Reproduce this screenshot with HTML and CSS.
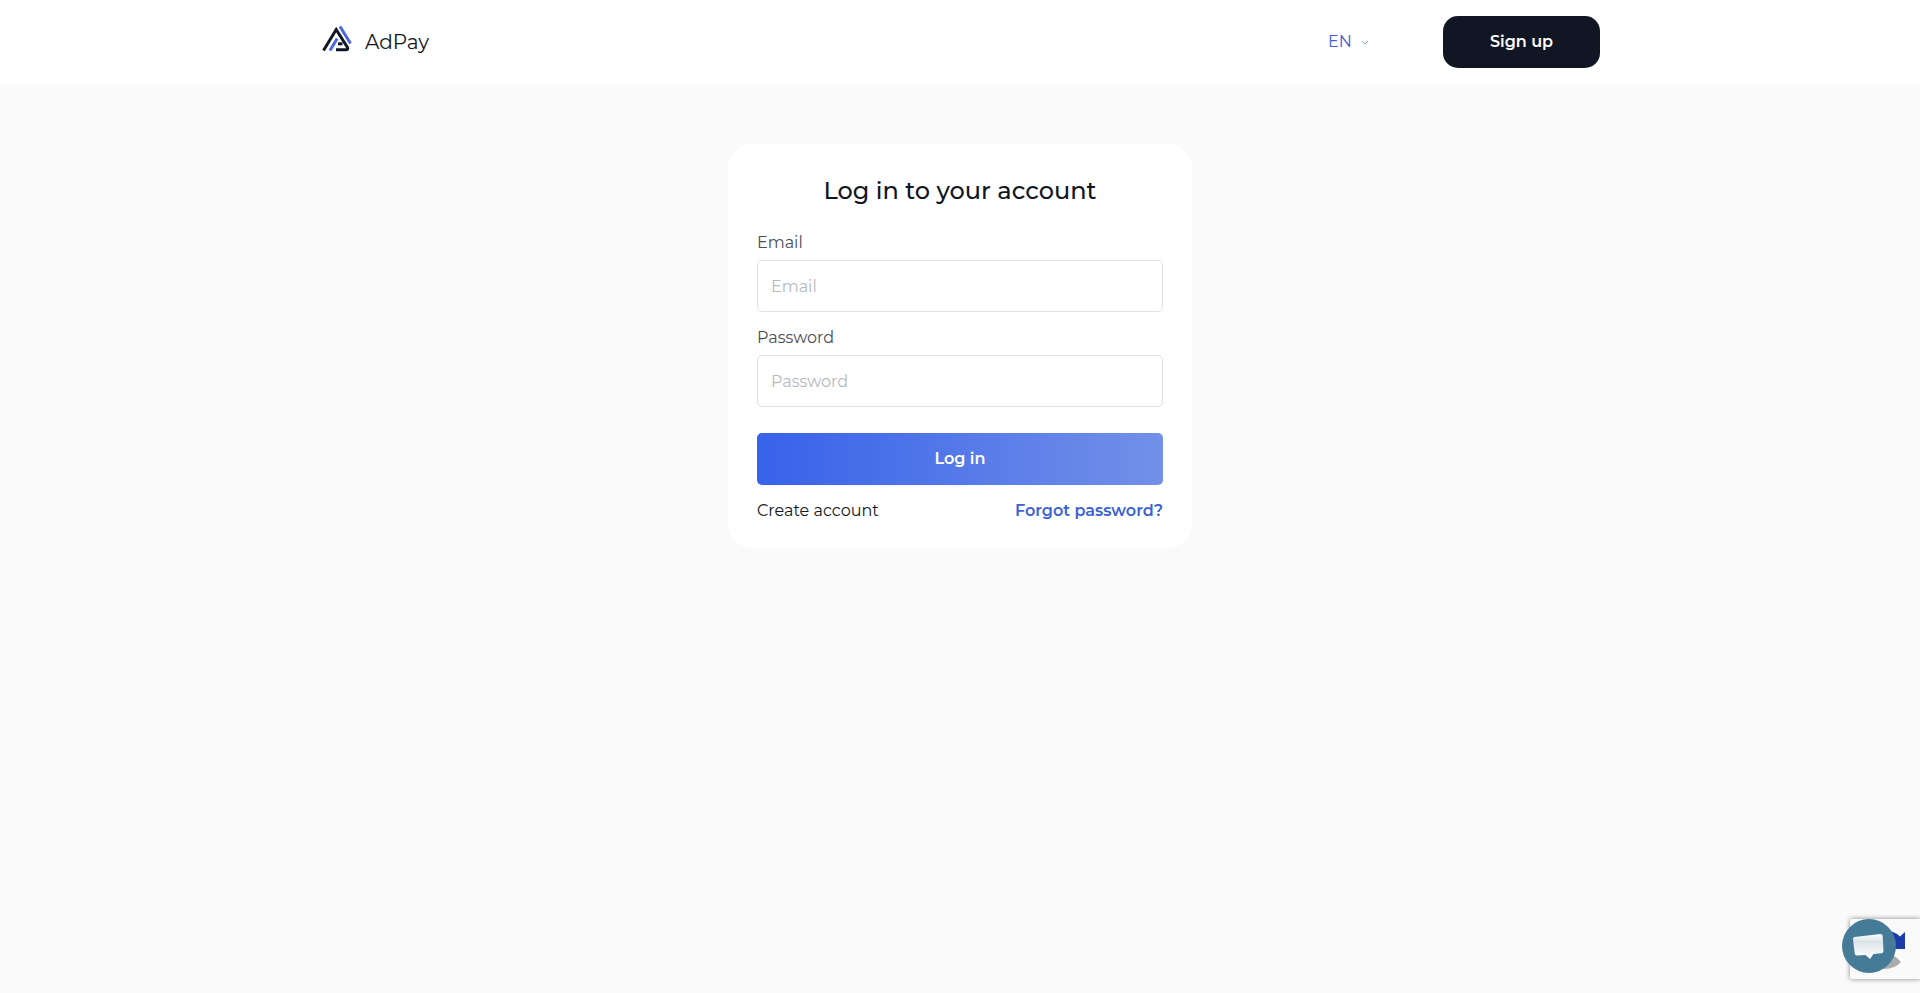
FILE: index.html
```html
<!DOCTYPE html>
<html lang="en">
<head>
<meta charset="utf-8">
<meta name="viewport" content="width=device-width, initial-scale=1">
<title>AdPay</title>
<link rel="stylesheet" href="styles.css">
</head>
<body>
<header class="header">
  <div class="container">
    <a class="logo" href="#">
      <svg class="logo-mark" viewBox="0 0 30 26" aria-hidden="true">
        <path class="ink" d="M1.500 24.500 14.200 3.500 25.500 21.500Q26.500 23.700 24 23.700H14"/>
        <path class="ink" d="M16 17.800H20.500"/>
        <path class="blue" d="M8 24.500 15.200 12.500"/>
        <path class="blue" d="M18 .5 28.500 17.500"/>
      </svg>
      <span class="logo-name">AdPay</span>
    </a>
    <nav class="nav">
      <div class="lang">
        <select class="lang-select" aria-label="Language"><option>EN</option></select>
        <svg class="chevron" viewBox="0 0 8 5" aria-hidden="true"><path d="M1 1 4 4 7 1"/></svg>
      </div>
      <button class="signup" type="button">Sign up</button>
    </nav>
  </div>
</header>
<main class="main">
  <form class="card">
    <h1 class="title">Log in to your account</h1>
    <label class="label" for="email">Email</label>
    <input class="field" id="email" type="email" placeholder="Email">
    <label class="label" for="password">Password</label>
    <input class="field" id="password" type="password" placeholder="Password">
    <button class="submit" type="button">Log in</button>
    <div class="links">
      <a class="create" href="#">Create account</a>
      <a class="forgot" href="#">Forgot password?</a>
    </div>
  </form>
</main>
<div class="captcha">
  <svg class="captcha-mark" viewBox="0 0 46 46" aria-hidden="true">
    <path class="captcha-blue" d="M4 22A19 19 0 0 1 36 11.500L41 7V24H24Z"/>
    <path class="captcha-gray" d="M4 24H20L33 33 37 37Q31 44 20 44 6 43 4 24Z"/>
  </svg>
</div>
<button class="chat" type="button" aria-label="Open chat">
  <svg class="chat-icon" viewBox="0 0 54 54" aria-hidden="true">
    <defs><linearGradient id="bubble" x1="0" y1="0" x2="0" y2="1"><stop offset="0" stop-color="#fff"/><stop offset=".3" stop-color="#dce4e8"/><stop offset="1" stop-color="#fff"/></linearGradient></defs>
    <path d="M12.500 18 38.500 15Q40.500 15 40.700 17L41.500 32Q41.500 34 39.500 34.200L31.500 35 28 40 23.500 36 15 36.500Q13 36.500 12.700 34.500L11 20Q11 18.200 12.500 18Z" fill="url(#bubble)"/>
  </svg>
</button>
</body>
</html>
```
FILE: styles.css
```css
* { box-sizing: border-box; }
body {
  margin: 0;
  min-height: 100vh;
  background: #fafafa;
  color: #101623;
  font: 16px/24px Montserrat, Inter, sans-serif;
}
button, input, select { font: inherit; }
a { color: inherit; text-decoration: none; }
.header { background: #fff; }
.container {
  max-width: 1280px;
  margin: 0 auto;
  padding: 16px 0;
  display: flex;
  align-items: center;
  justify-content: space-between;
}
.logo { display: flex; align-items: center; gap: 13px; padding-left: 2px; }
.logo-mark { width: 30px; height: 26px; margin-bottom: 6px; fill: none; stroke-width: 3; }
.ink { stroke: #101623; }
.blue { stroke: #4a68de; }
.logo-name { font-size: 20px; }
.nav { display: flex; align-items: center; gap: 74px; }
.lang { display: flex; align-items: center; gap: 9px; color: #3b62d6; }
.lang-select {
  appearance: none;
  border: 0;
  padding: 0;
  background: transparent;
  color: inherit;
}
.chevron { width: 8px; height: 5px; fill: none; stroke: #8d9de0; }
.signup {
  width: 157px;
  height: 52px;
  border: 0;
  border-radius: 15px;
  background: #101624;
  color: #fff;
  font-weight: 600;
}
.main { padding: 60px 16px; }
.card {
  display: flex;
  flex-direction: column;
  max-width: 464px;
  margin: 0 auto;
  padding: 32px 29px 25px;
  border-radius: 24px;
  background: #fff;
}
.title { margin: 0 0 25px; font-size: 24px; line-height: 30px; font-weight: 500; text-align: center; }
.label { margin-bottom: 5px; color: #4a4d55; }
.field {
  width: 100%;
  height: 52px;
  margin-bottom: 14px;
  padding: 0 13px;
  border: 1px solid #dfe0e3;
  border-radius: 5px;
  background: #fff;
}
.field::placeholder { color: #b5b9c0; opacity: 1; }
.submit {
  height: 52px;
  margin: 12px 0 14px;
  border: 0;
  border-radius: 5px;
  background: linear-gradient(90deg, #3762ea, #7390e8);
  color: #fff;
  font-weight: 600;
}
.links { display: flex; justify-content: space-between; }
.forgot { color: #3b62d6; font-weight: 600; }
.captcha {
  position: fixed;
  right: 0;
  bottom: 14px;
  width: 70px;
  height: 60px;
  border-radius: 2px 0 0 2px;
  background: #fafafa;
  box-shadow: 0 0 5px gray;
}
.captcha-mark { width: 46px; height: 46px; margin: 6px 0 0 14px; }
.captcha-blue { fill: #1c3aa9; }
.captcha-gray { fill: #ababab; }
.chat {
  position: fixed;
  right: 24px;
  bottom: 20px;
  width: 54px;
  height: 54px;
  padding: 0;
  border: 0;
  border-radius: 50%;
  background: #457b96;
}
.chat-icon { display: block; width: 54px; height: 54px; }
```
